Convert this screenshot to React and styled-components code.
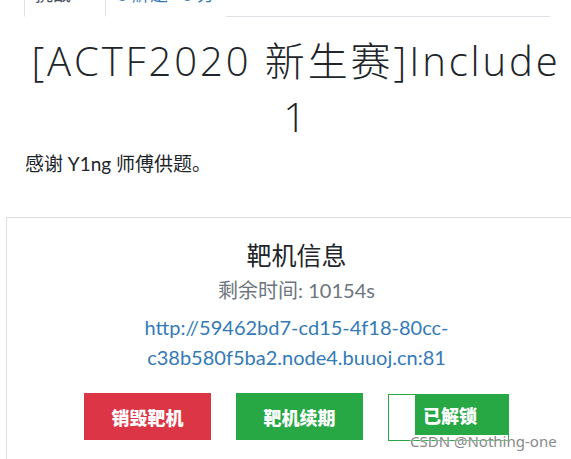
import React from "react";
import styled, { createGlobalStyle } from "styled-components";

const Global = createGlobalStyle`
  html {
    overflow: hidden;
  }
  body {
    margin: 0;
    padding: 0;
    background: #fff;
    font-family: Lato, "Noto Sans CJK SC", sans-serif;
    color: #212529;
  }
`;

const Page = styled.div`
  position: relative;
  display: flex;
  flex-direction: column;
  width: 592px;
  height: 459px;
  overflow: hidden;
`;

const Tabs = styled.ul`
  display: flex;
  flex-shrink: 0;
  list-style: none;
  margin: -24px 0 0 24px;
  padding: 0;
  width: 526px;
  height: 40px;
  border-bottom: 1px solid #dee2e6;
`;

const Tab = styled.li`
  box-sizing: border-box;
  width: ${(p) => (p.$active ? "82px" : "auto")};
  height: 41px;
  padding: 4px 10px;
  font-size: 18px;
  color: ${(p) => (p.$active ? "#495057" : "#337ab7")};
  background: #fff;
  border: 1px solid ${(p) => (p.$active ? "#dee2e6" : "transparent")};
  border-bottom-color: ${(p) => (p.$active ? "#fff" : "transparent")};
  border-top: none;
`;

const Title = styled.h1`
  margin: 16px 0 0;
  text-align: center;
  font-family: "Open Sans", "Noto Sans CJK SC", sans-serif;
  font-weight: 300;
  font-size: 40px;
  letter-spacing: 2.9px;
  line-height: 56px;
  color: #212529;
`;

const Description = styled.p`
  margin: 6px 0 0 25px;
  font-size: 19px;
  line-height: 26px;
`;

const Card = styled.div`
  flex: 1;
  margin: 40px 6px 0;
  border-top: 1px solid #dfdfdf;
  border-left: 1px solid #dfdfdf;
  padding-top: 21px;
  text-align: center;
`;

const CardTitle = styled.h4`
  margin: 0;
  font-size: 25px;
  font-weight: 400;
  line-height: 33px;
`;

const Remaining = styled.div`
  margin-top: 4px;
  font-size: 20px;
  line-height: 28px;
  color: #6c757d;
`;

const Link = styled.a`
  display: block;
  width: 330px;
  margin: 8px auto 0;
  font-size: 20px;
  line-height: 30px;
  color: #337ab7;
  text-decoration: none;
`;

const Buttons = styled.div`
  display: flex;
  justify-content: center;
  gap: 25px;
  margin-top: 21px;
`;

const Button = styled.button`
  box-sizing: border-box;
  width: 127px;
  height: 47px;
  border: none;
  border-radius: 0;
  font-family: "Noto Sans CJK SC", sans-serif;
  font-weight: 900;
  font-size: 18px;
  color: #fff;
  background: ${(p) => p.$bg};
  padding: 0;
`;

const UnlockedButton = styled.div`
  box-sizing: border-box;
  display: flex;
  justify-content: flex-end;
  width: 121px;
  height: 47px;
  margin-top: 1px;
  border: 1px solid #28a745;
  background: #fff;
`;

const UnlockedFill = styled.span`
  display: flex;
  align-items: center;
  padding-left: 8px;
  width: 94px;
  height: 41px;
  margin: -1px -1px 0 0;
  box-sizing: border-box;
  background: #28a745;
  color: #fff;
  font-family: "Noto Sans CJK SC", sans-serif;
  font-weight: 900;
  font-size: 18px;
`;

const Watermark = styled.div`
  position: absolute;
  left: 410px;
  top: 431px;
  font-family: "Noto Sans", sans-serif;
  font-size: 15px;
  color: #888;
  text-shadow: 0 0 2px #fff, 0 0 1px #fff;
  white-space: nowrap;
`;

export default function App() {
  return (
    <Page>
      <Global />
      <Tabs>
        <Tab $active>挑战</Tab>
        <Tab>0 解题 · 0 分</Tab>
      </Tabs>
      <Title>
        [ACTF2020 新生赛]Include
        <br />1
      </Title>
      <Description>感谢 Y1ng 师傅供题。</Description>
      <Card>
        <CardTitle>靶机信息</CardTitle>
        <Remaining>剩余时间: 10154s</Remaining>
        <Link href="#">
          http://59462bd7-cd15-4f18-80cc-c38b580f5ba2.node4.buuoj.cn:81
        </Link>
        <Buttons>
          <Button $bg="#dc3545">销毁靶机</Button>
          <Button $bg="#28a745">靶机续期</Button>
          <UnlockedButton>
            <UnlockedFill>已解锁</UnlockedFill>
          </UnlockedButton>
        </Buttons>
      </Card>
      <Watermark>CSDN @Nothing-one</Watermark>
    </Page>
  );
}
